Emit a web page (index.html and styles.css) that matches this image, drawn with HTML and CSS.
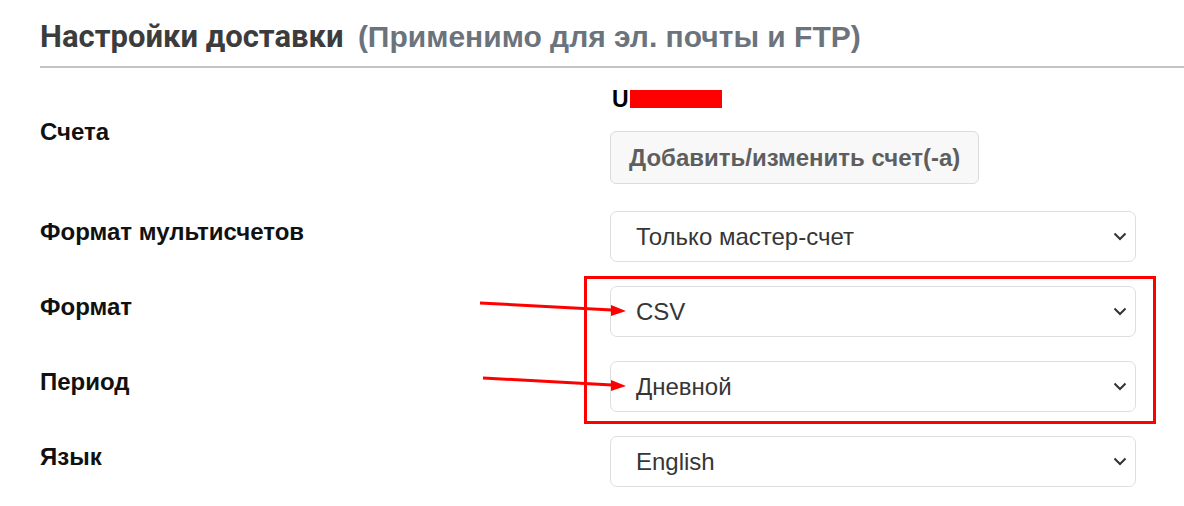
FILE: index.html
```html
<!DOCTYPE html>
<html lang="ru">
<head>
<meta charset="utf-8">
<link rel="stylesheet" href="styles.css">
</head>
<body>
<div class="page">
  <h2 class="title"><span class="title-main">Настройки доставки</span> <span class="title-sub">(Применимо для эл. почты и FTP)</span></h2>
  <div class="form">
    <div class="row row-accounts">
      <div class="label">Счета</div>
      <div class="field">
        <div class="account"><span class="acc-id">U</span><span class="redact"></span></div>
        <button class="btn">Добавить/изменить счет(-а)</button>
      </div>
    </div>
    <div class="row">
      <div class="label">Формат мультисчетов</div>
      <div class="field"><div class="select"><span>Только мастер-счет</span><svg class="chev" width="14" height="9" viewBox="0 0 14 9"><path d="M1.5 1.5 L7 7 L12.5 1.5" fill="none" stroke="#333" stroke-width="2"/></svg></div></div>
    </div>
    <div class="row">
      <div class="label">Формат</div>
      <div class="field"><div class="select"><span>CSV</span><svg class="chev" width="14" height="9" viewBox="0 0 14 9"><path d="M1.5 1.5 L7 7 L12.5 1.5" fill="none" stroke="#333" stroke-width="2"/></svg></div></div>
    </div>
    <div class="row">
      <div class="label">Период</div>
      <div class="field"><div class="select"><span>Дневной</span><svg class="chev" width="14" height="9" viewBox="0 0 14 9"><path d="M1.5 1.5 L7 7 L12.5 1.5" fill="none" stroke="#333" stroke-width="2"/></svg></div></div>
    </div>
    <div class="row">
      <div class="label">Язык</div>
      <div class="field"><div class="select"><span>English</span><svg class="chev" width="14" height="9" viewBox="0 0 14 9"><path d="M1.5 1.5 L7 7 L12.5 1.5" fill="none" stroke="#333" stroke-width="2"/></svg></div></div>
    </div>
  </div>
  <div class="highlight"></div>
  <svg class="arrows" width="1184" height="506" viewBox="0 0 1184 506">
    <path d="M480 303 L612 310" stroke="#ff0000" stroke-width="3" fill="none"/>
    <path d="M626 311 L611 305 L611 316 Z" fill="#ff0000"/>
    <path d="M483 378 L612 385" stroke="#ff0000" stroke-width="3" fill="none"/>
    <path d="M626 386 L611 380 L611 391 Z" fill="#ff0000"/>
  </svg>
</div>
</body>
</html>
```
FILE: styles.css
```css
html, body {
  margin: 0;
  padding: 0;
  background: #ffffff;
}
.page {
  position: relative;
  width: 1184px;
  height: 506px;
  overflow: hidden;
  font-family: "Liberation Sans", Arial, sans-serif;
}
.title {
  margin: 0 0 0 40px;
  padding: 19px 0 11px 0;
  border-bottom: 2px solid #c4c4c4;
  font-size: 30px;
  line-height: 36px;
  font-weight: 700;
  white-space: nowrap;
}
.title-main {
  font-family: Roboto, "Liberation Sans", sans-serif;
  color: #3c3c3c;
  font-size: 31px;
}
.title-sub {
  color: #6b737c;
  margin-left: 6px;
}
.form {
  padding: 20px 0 0 40px;
  display: flex;
  flex-direction: column;
  gap: 24px;
}
.row {
  display: grid;
  grid-template-columns: 570px 526px;
  align-items: center;
}
.row-accounts {
  margin-bottom: 3px;
}
.label {
  font-size: 24px;
  font-weight: 700;
  color: #111;
  padding-bottom: 10px;
}
.row-accounts .label {
  padding-bottom: 8px;
}
.field {
  display: flex;
  flex-direction: column;
  align-items: flex-start;
}
.account {
  display: flex;
  align-items: center;
  height: 22px;
  font-size: 23px;
  font-weight: 700;
  color: #000;
  padding-left: 2px;
}
.acc-id {
  width: 18px;
}
.redact {
  display: inline-block;
  width: 92px;
  height: 18px;
  background: #ff0000;
}
.btn {
  margin-top: 21px;
  height: 53px;
  padding: 0 18px;
  background: #f8f8f8;
  border: 1px solid #dcdcdc;
  border-radius: 6px;
  font-family: "Liberation Sans", Arial, sans-serif;
  font-size: 24px;
  font-weight: 700;
  color: #5e5e5e;
}
.select {
  box-sizing: border-box;
  width: 526px;
  height: 51px;
  border: 1px solid #dedede;
  border-radius: 7px;
  display: flex;
  align-items: center;
  justify-content: space-between;
  padding: 0 8px 0 25px;
  font-size: 24px;
  color: #363636;
}
.chev {
  display: block;
}
.highlight {
  position: absolute;
  left: 584px;
  top: 276px;
  width: 566px;
  height: 142px;
  border: 3px solid #ff0000;
}
.arrows {
  position: absolute;
  left: 0;
  top: 0;
  pointer-events: none;
}
```
